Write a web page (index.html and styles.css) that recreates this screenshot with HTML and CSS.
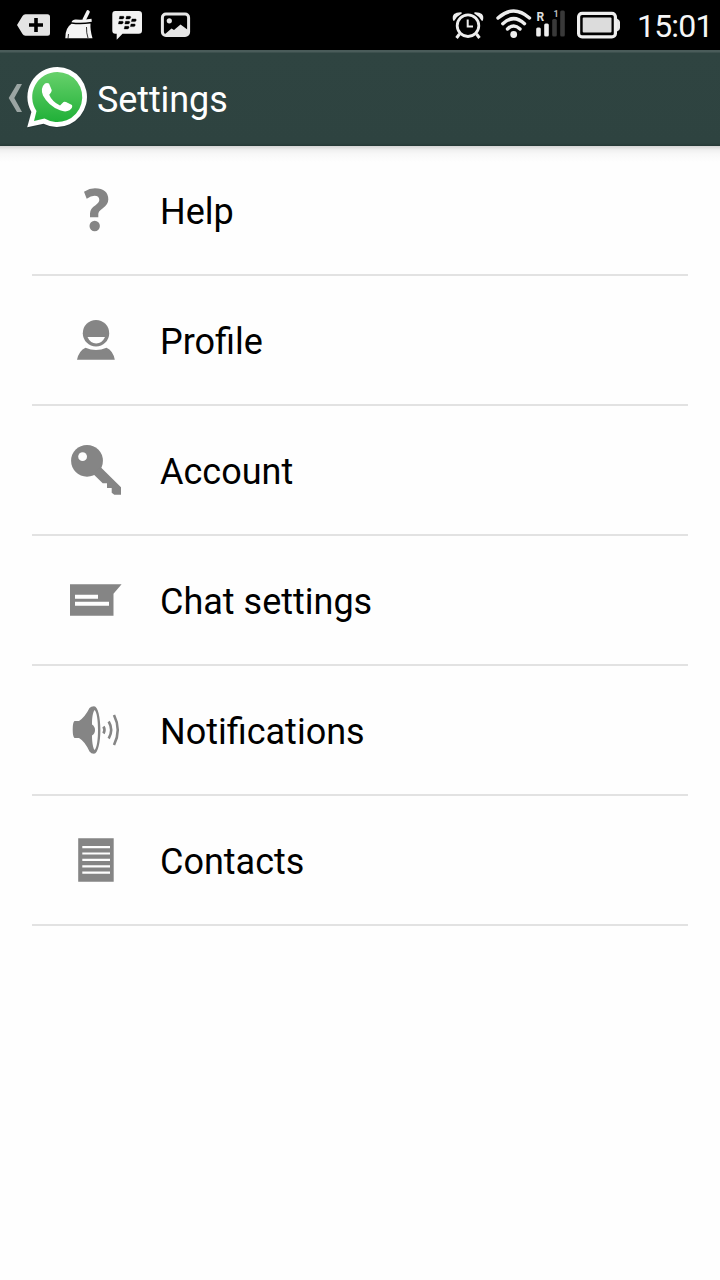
FILE: index.html
```html
<!DOCTYPE html>
<html lang="en">
<head>
<meta charset="utf-8">
<title>Settings</title>
<link rel="stylesheet" href="styles.css">
</head>
<body>
<div class="status">
  <div class="status-group">
    <svg width="48" height="50" viewBox="8 0 48 50"><path d="M17 25L22.500 16Q23.500 14.300 25.500 14.300H47.500Q50 14.300 50 16.800V33.200Q50 35.700 47.500 35.700H25.500Q23.500 35.700 22.500 34Z" fill="#e4e4e4"/><path d="M36 18V32M29 25H43" stroke="#000" stroke-width="3.600"/></svg>
    <svg width="48" height="50" viewBox="56 0 48 50"><path d="M88 12L84.300 19.500" stroke="#f4f4f4" stroke-width="3.600" stroke-linecap="round"/><path d="M71.500 22.200Q72.500 19.300 76 19.500Q83 20 91.500 18.700L91.800 21.800Q81 23.500 71.500 22.200Z" fill="#f4f4f4"/><path d="M71.500 23.800Q81 25 90.500 23.500Q90 30 92.500 38.300H65.300Q65 28 71.500 23.800Z" fill="#f4f4f4"/><path d="M68.500 34L68 38.500M86.500 27Q86.300 33 88 38" stroke="#000" stroke-width=".8" fill="none"/></svg>
    <svg width="48" height="50" viewBox="104 0 48 50"><path d="M115.300 11H138.700Q142 11 142 14.300V30.400Q142 33.700 138.700 33.700H122.500L116.700 39.700V33.700H115.300Q112.300 33.700 112.300 30.400V14.300Q112.300 11 115.300 11Z" fill="#f2f2f2"/><path d="M119.800 16.300h3.500q1 .2.700 1.300t-1.500 1.300h-3.300zM126.500 16.300h3.500q1 .2.700 1.300t-1.500 1.300h-3.300zM119 21.300h3.500q1 .2.700 1.300t-1.500 1.300h-3.300zM125.500 21.300h3.500q1 .2.700 1.300t-1.500 1.300h-3.300zM132 19h3.500q1 .2.700 1.300t-1.500 1.300h-3.300zM131 24h3.500q1 .2.700 1.300t-1.500 1.300h-3.300zM124.800 26.300h3.500q1 .2.700 1.300t-1.500 1.300h-3.300z" stroke="#000" stroke-width=".4"/></svg>
    <svg width="48" height="50" viewBox="152 0 48 50"><rect x="162.400" y="14.100" width="26.200" height="21.400" rx="3.500" fill="none" stroke="#e6e6e6" stroke-width="3"/><circle cx="169.300" cy="20.800" r="2.600" fill="#e6e6e6"/><path d="M164 35L171.500 28.500L174 30L180.500 24.500L188 30V35Z" fill="#e6e6e6"/></svg>
  </div>
  <div class="status-group">
    <svg width="45" height="50" viewBox="448 0 45 50"><circle cx="468" cy="25.700" r="10.800" fill="none" stroke="#eee" stroke-width="2.800"/><path d="M467.700 19.500V26.500H473" fill="none" stroke="#eee" stroke-width="2"/><path d="M453.800 20Q452 12.800 461 13Q456.500 15.500 453.800 20ZM482.200 20Q484 12.800 475 13Q479.500 15.500 482.200 20Z" fill="#eee" stroke="#eee" stroke-width="1.600" stroke-linejoin="round"/><path d="M459.500 34L456.500 38M476.500 34L479.500 38" stroke="#eee" stroke-width="3"/></svg>
    <svg width="41" height="50" viewBox="493 0 41 50"><g fill="none" stroke="#eee" stroke-width="3.400" stroke-linecap="round"><path d="M498 18Q513.500 4 529.500 18"/><path d="M502.800 23.700Q513.700 13.500 524.500 23.700"/><path d="M507.500 29Q513.700 23 520 29"/></g><circle cx="513.700" cy="34.500" r="3.400" fill="#eee"/></svg>
    <svg width="36" height="50" viewBox="534 0 36 50"><g fill="#eee"><rect x="536.200" y="27.500" width="4.600" height="9" rx="1.500"/><rect x="544.200" y="23.500" width="4.600" height="13" rx="1.500"/></g><g fill="#393939"><rect x="552.200" y="19" width="4.600" height="17.500" rx="1.500"/><rect x="560.200" y="10.500" width="4.600" height="26" rx="1.500"/></g><text x="536.500" y="20.500" class="signal-label">R</text><text x="553.500" y="17.300" class="signal-label signal-sim">1</text></svg>
    <svg width="52" height="50" viewBox="570 0 52 50"><rect x="578.600" y="13.300" width="36.800" height="23.600" rx="3.500" fill="none" stroke="#efefef" stroke-width="3.200"/><path d="M617 18.500Q620 20 620 22V28Q620 30 617 31.500Z" fill="#e8e8e8"/><rect x="582.700" y="17.500" width="28.800" height="15" rx="1" fill="#dcdcdc"/></svg>
    <span class="clock">15:01</span>
  </div>
</div>
<header class="bar">
  <svg width="92" height="96" viewBox="0 50 92 96">
    <defs><linearGradient id="green" x2="0" y2="1"><stop offset="0" stop-color="#67d16b"/><stop offset="1" stop-color="#20b038"/></linearGradient></defs>
    <path d="M17 84H22L14.300 98L22 112H17L8.700 98Z" fill="#9ba5a3"/>
    <path d="M57.300 67A30 30 0 1 1 43.500 123.800L27.200 127.800L31.500 112A30 30 0 0 1 57.300 67Z" fill="#1c2c2a" opacity=".35" transform="translate(0 1)"/>
    <path d="M57.300 67A30 30 0 1 1 43.500 123.800L27.200 127.300L31.400 112A30 30 0 0 1 57.300 67Z" fill="#fff"/>
    <path d="M57.300 72A25 25 0 1 1 44.500 118.500L34 121L36.500 111A25 25 0 0 1 57.300 72Z" fill="url(#green)"/>
    <path d="M45 83.500Q47 82.500 49 83.500L51.700 90Q52 91.500 49.200 94.700Q52 101.500 60 105.500L63.500 102Q64.500 101.300 66 102L72 105Q73 108 69.500 110.300Q65.500 112.500 60 110.300Q48.500 106 43 95.500Q40 88 45 83.500Z" fill="#fff"/>
  </svg>
  <h1 class="title">Settings</h1>
</header>
<main class="list">
  <div class="row"><svg class="icon" viewBox="0 0 64 64"><path d="M20 13.700Q25.500 10.300 31 10.300Q44.300 10.700 44.300 21.500Q44.300 26.500 38.500 30.500Q34.300 33.300 34.300 36V39.300H26V35.500Q26 30.500 31.500 27.200Q35.300 24.500 35.300 22Q35.300 17.700 30.500 17.700Q27 17.700 22.700 20.800Z"/><circle cx="30.700" cy="48" r="5.200"/></svg><span class="label">Help</span></div>
  <div class="row"><svg class="icon" viewBox="0 0 64 64"><circle cx="32" cy="25.200" r="13.200"/><path d="M23.500 29H41Q38 35.500 32.200 35.500T23.500 29Z" class="cut"/><path d="M13 51.700Q15 42.500 21.500 39.700Q32 44.500 42.500 39.700Q49 42.500 50.800 51.700Z"/></svg><span class="label">Profile</span></div>
  <div class="row"><svg class="icon" viewBox="0 0 64 64"><circle cx="23" cy="22.800" r="15.900"/><circle cx="18.600" cy="18.700" r="4.400" class="cut"/><path d="M36.500 29L57 49.300V56.700H50.300L47.700 54.700V50H43V45.300H38.700L28.700 35.500Z"/></svg><span class="label">Account</span></div>
  <div class="row"><svg class="icon" viewBox="0 0 64 64"><path d="M6 16.300H57.600L49.500 25.700V47.700H6Z"/><path d="M11 26.700H34V30.700H11ZM11 33.700H45V37.700H11Z" class="cut"/></svg><span class="label">Chat settings</span></div>
  <div class="row"><svg class="icon" viewBox="0 0 64 64"><path d="M10.500 23H15Q21 19 25.500 10Q27 8.300 30 8.300C34 8.300 36.400 20 36.400 32S34 55.700 30 55.700Q27 55.700 25.500 53.500Q21 43.500 15 40H10.500Q8.700 39 8.700 31.500T10.500 23Z"/><path d="M30.500 12C33 14 34 23 34 32S33 50 30.500 52C28.500 49 28 42 28 37.500Q31 35.500 31 32T28 26.500C28 21 28.500 15 30.500 12Z" class="cut"/><g class="waves"><path d="M39.500 28.500Q41.500 32 39.500 35.500"/><path d="M44.700 23.500Q49.700 32 44.700 40.500"/><path d="M50 17Q57.500 32 50 47"/></g></svg><span class="label">Notifications</span></div>
  <div class="row"><svg class="icon" viewBox="0 0 64 64"><path d="M14.200 10.300H49.700V53.700H14.200Z"/><path d="M18.300 18H46v2.200H18.300ZM18.300 24.400H46v2.200H18.300ZM18.300 30.800H46v2.200H18.300ZM18.300 37.200H46v2.200H18.300ZM18.300 43.600H46v2.200H18.300Z" class="cut"/></svg><span class="label">Contacts</span></div>
</main>
</body>
</html>
```
FILE: styles.css
```css
body {
  margin: 0;
  background: #fefefe;
  font-family: Roboto, "Liberation Sans", sans-serif;
}
svg { display: block; flex: none; }
.status {
  height: 50px;
  background: #000;
  display: flex;
  justify-content: space-between;
  padding-left: 8px;
}
.status-group { display: flex; align-items: center; }
.clock {
  width: 83px;
  margin-left: 15px;
  font-size: 32px;
  font-weight: 400;
  line-height: 52px;
  height: 50px;
  letter-spacing: -0.8px;
  color: #f6f6f6;
  white-space: nowrap;
}
.signal-label { font-size: 12px; font-weight: 700; fill: #ddd; }
.signal-sim { font-size: 9px; fill: #bbb; }
.bar {
  height: 96px;
  box-sizing: border-box;
  display: flex;
  align-items: center;
  background: linear-gradient(#4a5c5a 0 2px, #2f4441 3px, #2e4340 93px, #263936 96px);
}
.title {
  margin: 3px 0 0 5px;
  font-size: 36px;
  font-weight: 400;
  letter-spacing: -0.1px;
  color: #fff;
}
.list {
  padding: 0 32px;
  background: linear-gradient(#d4d4d4, #f0f0f0 4px, #f8f8f8 8px, #fefefe 16px);
}
.row {
  height: 130px;
  box-sizing: border-box;
  border-bottom: 2px solid #e2e2e2;
  display: flex;
  align-items: center;
  padding-left: 32px;
  gap: 32px;
}
.icon { width: 64px; height: 64px; fill: #858585; }
.cut { fill: #fefefe; }
.waves { fill: none; stroke: #858585; stroke-width: 2.6; }
.label { font-size: 36px; line-height: 42px; color: #000; margin-top: 4px; }
```
